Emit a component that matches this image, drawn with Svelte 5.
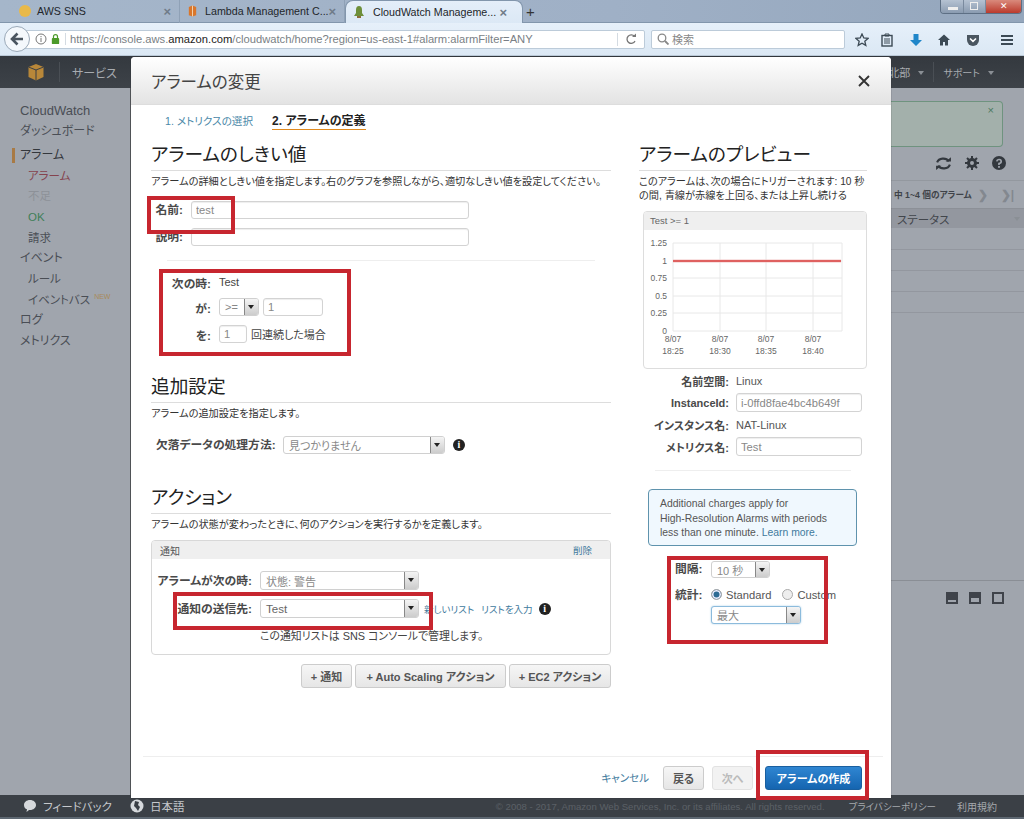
<script lang="ts">
	const tabs = [
		{ title: 'AWS SNS', color: '#e9b949', w: 180 },
		{ title: 'Lambda Management C...', color: '#d9762b', w: 165 }
	];
	const sideNav = [
		{ label: 'CloudWatch', cls: 'top brand' },
		{ label: 'ダッシュボード', cls: 'top' },
		{ label: 'アラーム', cls: 'top current' },
		{ label: 'アラーム', cls: 'sub red' },
		{ label: '不足', cls: 'sub faded' },
		{ label: 'OK', cls: 'sub green' },
		{ label: '請求', cls: 'sub' },
		{ label: 'イベント', cls: 'top' },
		{ label: 'ルール', cls: 'sub' },
		{ label: 'イベントバス', cls: 'sub', isNew: true },
		{ label: 'ログ', cls: 'top' },
		{ label: 'メトリクス', cls: 'top' }
	];
	const yTicks = [
		{ label: '1.25', y: 13 },
		{ label: '1', y: 31 },
		{ label: '0.75', y: 48 },
		{ label: '0.5', y: 66 },
		{ label: '0.25', y: 83 },
		{ label: '0', y: 101 }
	];
	const xTicks = [
		{ time: '18:25', x: 29 },
		{ time: '18:30', x: 76 },
		{ time: '18:35', x: 122 },
		{ time: '18:40', x: 169 }
	];
	// red annotation boxes drawn over the screenshot
	const marks = [
		{ x: 147, y: 196, w: 88, h: 38 },
		{ x: 159, y: 269, w: 192, h: 87 },
		{ x: 173, y: 592, w: 260, h: 38 },
		{ x: 667, y: 556, w: 161, h: 88 },
		{ x: 756, y: 750, w: 113, h: 50 }
	];
</script>

<div class="page">
	<div class="tabstrip">
		{#each tabs as t, i}
			<div class="tab" style="width:{t.w}px">
				{#if i === 0}
					<span class="fav" style="background:{t.color}"></span>
				{:else}
					<svg class="favsvg" viewBox="0 0 12 12"><path d="M2 1.500L6 0l4 1.500v9L6 12l-4-1.500z" fill={t.color}/><path d="M6 0v12" stroke="#f3d9b8"/></svg>
				{/if}
				<span class="tabtitle">{t.title}</span>
				<span class="tabx">×</span>
			</div>
		{/each}
		<div class="tab active">
			<svg class="favsvg bell" viewBox="0 0 14 14"><path d="M7 1c2 0 3 1.500 3 4v3l2 3H2l2-3V5c0-2.500 1-4 3-4z" fill="#6d8f3a"/><rect x="5" y="11" width="4" height="2" fill="#8a6d3a"/></svg>
			<span class="tabtitle">CloudWatch Manageme...</span>
			<span class="tabx">×</span>
		</div>
		<span class="newtab">+</span>
		<div class="winbtns">
			<span class="wb"><i class="wmin"></i></span>
			<span class="wb"><i class="wmax"></i></span>
			<span class="wb close">✕</span>
		</div>
	</div>

	<div class="toolbar">
		<div class="back">
			<svg viewBox="0 0 14 14" width="14" height="14"><path d="M7.500 1.500L2 7l5.500 5.500M2.500 7H13" fill="none" stroke="#4a5560" stroke-width="2.600"/></svg>
		</div>
		<div class="urlbar">
			<svg class="ic" viewBox="0 0 12 12" width="12" height="12"><circle cx="6" cy="6" r="5" fill="none" stroke="#777"/><path d="M6 5v4M6 3v1.200" stroke="#777"/></svg>
			<svg class="ic" viewBox="0 0 12 12" width="11" height="12"><rect x="2" y="5" width="8" height="6.500" rx="1" fill="#4c9a2a"/><path d="M3.800 5V3.500a2.200 2.200 0 0 1 4.400 0V5" fill="none" stroke="#4c9a2a" stroke-width="1.300"/></svg>
			<span class="url">https://console.aws.<b>amazon.com</b>/cloudwatch/home?region=us-east-1#alarm:alarmFilter=ANY</span>
			<span class="reload">
				<svg viewBox="0 0 12 12" width="12" height="12"><path d="M9.500 3.500A4.200 4.200 0 1 0 10 8" fill="none" stroke="#777" stroke-width="1.300"/><path d="M7 4h4V0.500z" fill="#777"/></svg>
			</span>
		</div>
		<div class="searchbar">
			<svg viewBox="0 0 12 12" width="12" height="12"><circle cx="5" cy="5" r="3.800" fill="none" stroke="#888" stroke-width="1.300"/><path d="M8 8l3.500 3.500" stroke="#888" stroke-width="1.800"/></svg>
			<span>検索</span>
		</div>
		<div class="tools">
			<svg viewBox="0 0 14 14" width="14" height="14" style="left:855px"><path d="M7 1l1.800 4 4.200.400-3.200 2.800 1 4.200L7 10.200 3.200 12.400l1-4.200L1 5.400 5.200 5z" fill="none" stroke="#3c4a55" stroke-width="1.300"/></svg>
			<svg viewBox="0 0 14 14" width="14" height="14" style="left:880px"><rect x="2" y="2.500" width="10" height="10.500" fill="none" stroke="#3c4a55" stroke-width="1.400"/><path d="M5 1h4v2H5zM4 6h6M4 8h6M4 10h6" stroke="#3c4a55" fill="none"/></svg>
			<svg viewBox="0 0 14 14" width="14" height="14" style="left:909px"><path d="M4.500 1h5v6H13l-6 6-6-6h3.500z" fill="#1f86c9"/></svg>
			<svg viewBox="0 0 14 14" width="14" height="14" style="left:937px"><path d="M7 1.500L1 7h2v5.500h3V9h2v3.500h3V7h2z" fill="#3c4a55"/></svg>
			<svg viewBox="0 0 14 14" width="14" height="14" style="left:966px"><path d="M1 2h12v5a6 6 0 0 1-12 0z" fill="#4a5660"/><path d="M4 5.500l3 2.800 3-2.800" fill="none" stroke="#fff" stroke-width="1.600"/></svg>
			<svg viewBox="0 0 14 14" width="14" height="14" style="left:1000px"><path d="M1 3h12M1 7h12M1 11h12" stroke="#3c4a55" stroke-width="2.200"/></svg>
		</div>
	</div>

	<div class="console">
		<div class="topnav">
			<svg class="cube" viewBox="0 0 18 18" width="18" height="18"><path d="M9 1l7.500 3v10L9 17.500 1.500 14V4z" fill="#b88739"/><path d="M1.500 4L9 7l7.500-3M9 7v10.500" fill="none" stroke="#3a3f45" stroke-width="1"/></svg>
			<span class="navsep"></span>
			<span class="navitem services">サービス</span>
			<span class="spacer"></span>
			<span class="navitem">北部<i class="caret"></i></span>
			<span class="navsep tail"></span>
			<span class="navitem last">サポート<i class="caret"></i></span>
		</div>

		<div class="workspace">
			<nav class="side">
				{#each sideNav as item}
					<div class={'sideitem ' + item.cls}>{item.label}{#if item.isNew}<sup>NEW</sup>{/if}</div>
				{/each}
			</nav>
			<div class="under"></div>
			<div class="behind">
				<div class="notice"><span>×</span></div>
				<div class="behindicons">
					<svg viewBox="0 0 16 14" width="17" height="15"><path d="M2 6a6 5 0 0 1 11-1M14 8a6 5 0 0 1-11 1" fill="none" stroke="#33383e" stroke-width="2"/><path d="M10 5h5V1zM6 9H1v4z" fill="#33383e"/></svg>
					<svg viewBox="0 0 14 14" width="14" height="14"><circle cx="7" cy="7" r="3.500" fill="none" stroke="#33383e" stroke-width="3"/><path d="M7 0v3M7 11v3M0 7h3M11 7h3M2 2l2 2M10 10l2 2M12 2l-2 2M4 10l-2 2" stroke="#33383e" stroke-width="2"/></svg>
					<svg viewBox="0 0 14 14" width="14" height="14"><circle cx="7" cy="7" r="7" fill="#33383e"/><path d="M4.800 5.300A2.200 2 0 1 1 7 7.500V9" fill="none" stroke="#a0a5ad" stroke-width="1.700"/><rect x="6.100" y="10" width="1.800" height="1.800" fill="#a0a5ad"/></svg>
				</div>
				<div class="pager"><span>中 1~4 個のアラーム</span><b>❯</b><b class="lastp">❯|</b></div>
				<div class="thead"><span>ステータス</span><i class="caret"></i></div>
				<div class="trow"></div>
				<div class="trow"></div>
				<div class="trow"></div>
				<div class="trow"></div>
				<div class="splitter">
					<span class="sp a"></span><span class="sp b"></span><span class="sp c"></span>
				</div>
			</div>
		</div>

		<div class="footer">
			<span class="fb">
				<svg viewBox="0 0 14 14" width="14" height="14"><path d="M7 1c3.500 0 6 2.200 6 5s-2.500 5-6 5l-1 0-2.500 2 .5-2.800C2 9.800 1 8 1 6c0-2.800 2.500-5 6-5z" fill="#d6d9dc"/></svg>
				フィードバック
			</span>
			<span class="fb lang">
				<svg viewBox="0 0 14 14" width="14" height="14"><circle cx="7" cy="7" r="6.500" fill="#d6d9dc"/><path d="M5 2l4 1-1 3 2 2-2 4-2-3-2-2z" fill="#3a3f45"/></svg>
				日本語
			</span>
			<span class="copy">© 2008 - 2017, Amazon Web Services, Inc. or its affiliates. All rights reserved.</span>
			<span class="flink">プライバシーポリシー</span>
			<span class="flink terms">利用規約</span>
		</div>

		<section class="modal">
			<header class="mhead">
				<h1>アラームの変更</h1>
				<svg viewBox="0 0 12 12" width="12" height="12"><path d="M1 1l10 10M11 1L1 11" stroke="#333" stroke-width="1.900"/></svg>
			</header>

			<div class="steps">
				<span class="step">1. メトリクスの選択</span>
				<span class="step on">2. アラームの定義</span>
			</div>

			<div class="columns">
				<div class="left">
					<h2>アラームのしきい値</h2>
					<p class="desc">アラームの詳細としきい値を指定します。右のグラフを参照しながら、適切なしきい値を設定してください。</p>

					<div class="frow name"><label>名前:</label><input value="test" readonly /></div>
					<div class="frow desc2"><label>説明:</label><input readonly /></div>
					<hr class="inner" />

					<div class="cond">
						<div class="crow"><label>次の時:</label><span class="val">Test</span></div>
						<div class="crow mid">
							<label>が:</label>
							<div class="sel op"><span>&gt;=</span><i class="arrow"></i></div>
							<input class="num" value="1" readonly />
						</div>
						<div class="crow">
							<label>を:</label>
							<input class="cnt" value="1" readonly />
							<span class="val times">回連続した場合</span>
						</div>
					</div>

					<h2 class="extra">追加設定</h2>
					<p class="desc">アラームの追加設定を指定します。</p>
					<div class="missing">
						<label>欠落データの処理方法:</label>
						<div class="sel wide"><span>見つかりません</span><i class="arrow"></i></div>
						<span class="info">i</span>
					</div>

					<h2 class="actions">アクション</h2>
					<p class="desc">アラームの状態が変わったときに、何のアクションを実行するかを定義します。</p>
					<div class="panel">
						<div class="phead"><span>通知</span><a href="#top">削除</a></div>
						<div class="pbody">
							<div class="prow">
								<label>アラームが次の時:</label>
								<div class="sel pick"><span>状態: 警告</span><i class="arrow"></i></div>
							</div>
							<div class="prow second">
								<label>通知の送信先:</label>
								<div class="sel pick"><span class="dark">Test</span><i class="arrow"></i></div>
								<a class="mini first" href="#top">新しいリスト</a>
								<a class="mini" href="#top">リストを入力</a>
								<span class="info">i</span>
							</div>
							<p class="hint">この通知リストは SNS コンソールで管理します。</p>
						</div>
					</div>
					<div class="addbtns">
						<button>+ 通知</button>
						<button>+ Auto Scaling アクション</button>
						<button>+ EC2 アクション</button>
					</div>
				</div>

				<div class="right">
					<h2>アラームのプレビュー</h2>
					<p class="desc pv">このアラームは、次の場合にトリガーされます: 10 秒<br />の間, 青線が赤線を上回る、または上昇し続ける</p>

					<div class="graph">
						<div class="ghead">Test &gt;= 1</div>
						<svg viewBox="0 0 222 139" width="222" height="139">
							{#each yTicks as t}
								<line x1="29" x2="198" y1={t.y} y2={t.y} stroke="#e8e8e8" />
								<text x="23" y={t.y + 3} text-anchor="end">{t.label}</text>
							{/each}
							{#each xTicks as t}
								<line x1={t.x} x2={t.x} y1="13" y2="101" stroke="#e8e8e8" />
								<text x={t.x} y="112" text-anchor="middle">8/07</text>
								<text x={t.x} y="124" text-anchor="middle">{t.time}</text>
							{/each}
							<line x1="198" x2="198" y1="13" y2="101" stroke="#e8e8e8" />
							<line x1="29" x2="197" y1="31" y2="31" stroke="#f2c4c4" stroke-width="3" />
							<line x1="29" x2="197" y1="31" y2="31" stroke="#d9413f" stroke-width="1.600" />
						</svg>
					</div>

					<div class="meta lead"><label>名前空間:</label><span>Linux</span></div>
					<div class="meta"><label>InstanceId:</label><input value="i-0ffd8fae4bc4b649f" readonly /></div>
					<div class="meta"><label>インスタンス名:</label><span>NAT-Linux</span></div>
					<div class="meta"><label>メトリクス名:</label><input value="Test" readonly /></div>
					<hr class="inner rhr" />

					<div class="charges">
						Additional charges apply for<br />High-Resolution Alarms with periods<br />less than one minute. <a href="#top">Learn more.</a>
					</div>

					<div class="period">
						<label>間隔:</label>
						<div class="sel sec"><span>10 秒</span><i class="arrow"></i></div>
					</div>
					<div class="stat">
						<label>統計:</label>
						<span class="radio on"></span><span class="rlabel">Standard</span>
						<span class="radio"></span><span class="rlabel">Custom</span>
					</div>
					<div class="sel max"><span>最大</span><i class="arrow"></i></div>
				</div>
			</div>

			<footer class="mfoot">
				<a href="#top">キャンセル</a>
				<button>戻る</button>
				<button class="off">次へ</button>
				<button class="primary">アラームの作成</button>
			</footer>
		</section>
	</div>

	{#each marks as m}
		<div class="mark" style="left:{m.x}px;top:{m.y}px;width:{m.w}px;height:{m.h}px"></div>
	{/each}
</div>

<style>
	:global(body) { margin: 0; background: #3a3f45; }
	.page {
		position: relative; width: 1024px; height: 819px; overflow: hidden;
		font-family: "Liberation Sans", "Noto Sans CJK JP", sans-serif;
		font-feature-settings: "palt"; color: #444; font-size: 11px;
	}

	/* browser chrome */
	.tabstrip {
		height: 23px; display: flex; align-items: center; position: relative;
		background: linear-gradient(90deg, #a5b6ca, #9fb0c6 60%, #94a6bc);
		border-bottom: 1px solid #8296ac; box-sizing: border-box;
	}
	.tab { display: flex; align-items: center; height: 23px; padding-left: 19px; box-sizing: border-box; font-size: 10.700px; color: #22262a; border-right: 1px solid #8fa1b6; }
	.tab:nth-child(2) { padding-left: 7px; }
	.fav { width: 12px; height: 12px; border-radius: 50%; margin-right: 6px; flex: none; }
	.tabtitle { flex: 1; white-space: nowrap; }
	.tabx { color: #6f7b88; font-size: 13px; font-weight: bold; margin-right: 8px; }
	.tab.active {
		width: 178px; padding-left: 6px; background: linear-gradient(#e4eef9, #dbe8f5);
		border-radius: 8px 8px 0 0; border: 1px solid #8296ac; border-bottom: 0; height: 24px; margin-top: 1px;
	}
	.tab.active .tabx { margin-right: 15px; }
	.favsvg { width: 11px; height: 12px; margin-right: 7px; flex: none; }
	.favsvg.bell { width: 14px; height: 14px; }
	.newtab { margin-left: 3px; font-size: 15px; color: #333; }
	.winbtns { position: absolute; right: 2px; top: 0; width: 82px; height: 14px; display: flex; border: 1px solid #5d6f84; border-top: 0; border-radius: 0 0 4px 4px; overflow: hidden; box-sizing: border-box; }
	.wb { flex: 1; background: linear-gradient(#b5c2d2, #8a9bb0); position: relative; border-right: 1px solid #7a8a9e; }
	.wb.close { flex: 1.600; background: linear-gradient(#d98a7c, #bb3a2c); color: #fff; font-size: 9px; text-align: center; line-height: 13px; border: 0; }
	.wmin { position: absolute; left: 7px; bottom: 3px; width: 10px; height: 3px; background: #eee; }
	.wmax { position: absolute; left: 6px; top: 2px; width: 6px; height: 6px; border: 1px solid #eee; }

	.toolbar {
		height: 33px; display: flex; align-items: center; position: relative;
		background: linear-gradient(#e6f0fa, #dbe8f4); border-bottom: 1px solid #b9c8d6; box-sizing: border-box;
	}
	.back {
		width: 24px; height: 24px; border-radius: 50%; background: #f4f8fc; border: 1px solid #9aa9b8;
		margin-left: 4px; display: flex; align-items: center; justify-content: center; flex: none; z-index: 1;
	}
	.urlbar {
		width: 626px; height: 19px; margin-left: -11px; padding-left: 15px; background: #fff; border: 1px solid #bccbd9;
		display: flex; align-items: center; gap: 3px; border-radius: 2px; box-sizing: border-box;
	}
	.url { flex: 1; color: #7a7f85; font-size: 11.200px; white-space: nowrap; margin-left: 1px; padding-left: 4px; border-left: 1px solid #d4dbe2; overflow: hidden; }
	.url b { font-weight: normal; color: #222; }
	.reload { width: 26px; border-left: 1px solid #d4dbe2; text-align: center; height: 13px; line-height: 12px; }
	.searchbar {
		width: 194px; height: 19px; margin-left: 6px; background: #fff; border: 1px solid #bccbd9;
		display: flex; align-items: center; gap: 3px; padding-left: 5px; box-sizing: border-box; color: #888; font-size: 11px; border-radius: 2px;
	}
	.tools svg { position: absolute; top: 10px; }

	/* dimmed console behind the dialog */
	.console { position: relative; height: 763px; display: flex; flex-direction: column; background: #a0a5ad; }
	.topnav {
		height: 32px; flex: none; display: flex; align-items: center; color: #a7abb0; font-size: 11px;
		background: linear-gradient(#34393f, #3d4248);
	}
	.cube { margin-left: 27px; }
	.navsep { width: 1px; height: 20px; background: #4a4f55; margin-left: 14px; }
	.navsep.tail { margin-left: 9px; }
	.navitem { flex: none; white-space: nowrap; }
	.navitem.services { margin-left: 12px; font-size: 12px; }
	.spacer { flex: 1; }
	.navitem.last { margin: 0 30px 0 9px; font-size: 10px; }
	.caret { display: inline-block; border: 3px solid transparent; border-top: 4px solid #8a8f95; border-bottom: 0; margin-left: 8px; vertical-align: 2px; }

	.workspace { flex: 1; display: flex; min-height: 0; }
	.side { width: 131px; flex: none; padding-top: 12.500px; box-sizing: border-box; border-right: 1px solid #55585c; }
	.sideitem { line-height: 20.700px; height: 20.700px; padding-left: 20px; color: #4a4e55; font-size: 12px; }
	.sideitem.top.brand { font-size: 13px; }
	.sideitem.current { position: relative; color: #33373c; margin-top: 3px; }
	.sideitem.current::before { content: ""; position: absolute; left: 12px; top: 3px; width: 3px; height: 15px; background: #a87a45; }
	.sideitem.sub { padding-left: 28px; font-size: 11.500px; }
	.sideitem.red { color: #85434e; }
	.sideitem.faded { color: #8d9198; margin-top: 0; }
	.sideitem.green { color: #3f7f58; }
	.sideitem sup { font-size: 7px; color: #a98a5a; margin-left: 4px; vertical-align: 5px; line-height: 0; }
	.under { width: 760px; flex: none; }
	.behind { flex: 1; min-width: 0; position: relative; padding-top: 13px; color: #42464c; }
	.notice { height: 46px; width: 112px; box-sizing: border-box; border: 1px solid #6f937f; border-left: 0; border-radius: 0 4px 4px 0; background: #a3b0ab; text-align: right; padding: 2px 8px; color: #4c7a5f; }
	.behindicons { display: flex; gap: 13px; align-items: center; margin: 8px 0 0 44px; height: 16px; }
	.pager { margin-top: 9px; height: 27px; border-top: 1px solid #93989f; display: flex; align-items: center; font-size: 8.700px; color: #3f4349; font-weight: bold; white-space: nowrap; overflow: hidden; padding-left: 3px; }
	.pager b { color: #83888f; font-size: 12px; margin-left: 6px; }
	.pager .lastp { margin-left: 13px; }
	.thead { height: 20px; background: #93979f; border-top: 1px solid #8c9097; display: flex; align-items: center; justify-content: space-between; font-size: 11.500px; padding: 0 4px 0 6px; box-sizing: border-box; }
	.trow { height: 21px; border-bottom: 1px solid #93979f; box-sizing: border-box; }
	.thead + .trow { height: 22px; }
	.splitter { margin-top: 267px; border-top: 1px solid #8a8e95; height: 24px; display: flex; gap: 11px; padding: 11px 0 0 55px; position: relative; }
	.sp { width: 12px; height: 12px; box-sizing: border-box; border: 2px solid #3f434a; }
	.sp.a { background: linear-gradient(#3f434a 75%, #a0a5ad 75%); }
	.sp.b { background: linear-gradient(#3f434a 50%, #a0a5ad 50%); }

	.footer {
		height: 24px; flex: none; display: flex; align-items: center; background: #3b4046; color: #c5c8cc; font-size: 11.500px;
		border-bottom: 2px solid #5e6872; box-sizing: border-box;
	}
	.fb { display: flex; align-items: center; gap: 6px; margin-left: 23px; }
	.fb.lang { margin-left: 18px; }
	.copy { margin-left: auto; color: #5b6067; font-size: 9.600px; }
	.flink { font-size: 9.500px; color: #a5a9ad; margin-left: 24px; }
	.flink.terms { margin: 0 27px 0 21px; font-size: 10px; }

	/* dialog */
	.modal {
		position: absolute; z-index: 2; left: 131px; top: 1px; width: 760px; height: 741px; background: #fff;
		display: flex; flex-direction: column; border-radius: 4px 4px 0 0; box-shadow: 0 0 1px #222;
	}
	.mhead {
		height: 48px; flex: none; box-sizing: border-box; display: flex; align-items: center; justify-content: space-between;
		padding: 0 21px 0 20px; background: linear-gradient(#fff, #e3e3e3); border-bottom: 1px solid #ddd; border-radius: 4px 4px 0 0;
	}
	.mhead h1 { margin: 0; font-size: 16.500px; font-weight: normal; color: #444; }
	.steps { display: flex; gap: 19px; padding: 8px 0 0 34px; height: 16px; flex: none; }
	.step { font-size: 10.600px; line-height: 16px; color: #4a88a8; }
	.step.on { font-size: 12px; color: #222; font-weight: bold; border-bottom: 1px solid #e08a1e; height: 16px; }
	.columns { flex: 1; display: flex; padding: 0 24px 0 20px; gap: 28px; min-height: 0; }
	.left { width: 460px; flex: none; }
	.right { width: 228px; flex: none; }
	h2 {
		margin: 14px 0 0; font-size: 18.700px; line-height: 24px; font-weight: normal; color: #222;
		border-bottom: 1px solid #ddd; padding-bottom: 3px;
	}
	.desc { margin: 4px 0 0; font-size: 10.200px; line-height: 14px; color: #333; white-space: nowrap; }
	label { font-weight: bold; color: #4a4a4a; font-size: 11.800px; }
	.right label { font-size: 11px; }
	.right .period label { font-size: 11.800px; padding-bottom: 5px; }
	.right .stat label { font-size: 11.800px; padding-bottom: 2px; }
	input {
		font: inherit; color: #888; font-size: 11.200px; border: 1px solid #d3d3d3; border-radius: 3px; padding: 0 4px; box-sizing: border-box;
		height: 18px; background: #fff; outline: 0; box-shadow: inset 0 1px 1px #eee;
	}
	.frow { display: flex; align-items: center; gap: 8px; height: 18px; }
	.frow label { width: 32px; text-align: right; padding-bottom: 4px; }
	.frow input { width: 278px; }
	.frow.name { margin-top: 12px; }
	.frow.desc2 { margin-top: 9px; }
	hr.inner { border: 0; border-top: 1px solid #eee; margin: 14px 16px 0; }
	.cond { margin-top: 12px; }
	.crow { display: flex; align-items: center; gap: 4px; height: 18px; }
	.crow label { width: 60px; text-align: right; margin-right: 4px; }
	.crow.mid { margin-top: 7px; margin-bottom: 9px; }
	.val { color: #444; font-size: 11px; }
	.sel {
		display: flex; align-items: center; justify-content: space-between; height: 18px; box-sizing: border-box;
		border: 1px solid #d0d0d0; border-radius: 3px; background: #fff; color: #888; font-size: 11px; padding-left: 5px; flex: none;
	}
	.sel .dark { color: #666; font-size: 11.500px; }
	.arrow {
		width: 13px; align-self: stretch; background: linear-gradient(#f4f4f4, #ccc); border-left: 1px solid #888; border-radius: 0 2px 2px 0;
		position: relative; flex: none;
	}
	.arrow::after {
		content: ""; position: absolute; left: 3px; top: 6px; border: 3.500px solid transparent; border-top: 4px solid #222; border-bottom: 0;
	}
	.sel.op { width: 40px; }
	.num { width: 60px; }
	.cnt { width: 28px; }
	h2.extra { margin-top: 32px; }
	.missing { display: flex; align-items: center; margin: 15px 0 0 5px; height: 18px; }
	.missing label { width: 127px; white-space: nowrap; padding-bottom: 3px; }
	.sel.wide { width: 162px; }
	.info {
		width: 12px; height: 12px; border-radius: 50%; background: #222; color: #fff; font: bold 10px/12px "Liberation Serif", serif;
		text-align: center; margin-left: 8px; flex: none;
	}
	h2.actions { margin-top: 32px; }
	.panel { margin-top: 8px; border: 1px solid #d8d8d8; border-radius: 4px; height: 115px; box-sizing: border-box; }
	.phead { height: 18px; background: #efefef; display: flex; justify-content: space-between; align-items: center; padding: 0 18px 0 8px; font-size: 10px; color: #555; border-radius: 3px 3px 0 0; }
	.phead a, .mini { color: #3f7a9d; text-decoration: none; font-size: 9.500px; }
	.pbody { padding-top: 12px; }
	.prow { display: flex; align-items: center; height: 19px; }
	.prow label { width: 100px; text-align: right; flex: none; padding-bottom: 3px; white-space: nowrap; }
	.prow.second { margin-top: 9px; }
	.sel.pick { width: 159px; height: 19px; margin-left: 8px; }
	.mini.first { margin-left: 5px; }
	.mini { margin-left: 7px; }
	.prow .info { margin-left: 6px; }
	.hint { margin: 9px 0 0 108px; font-size: 10.900px; color: #444; white-space: nowrap; }
	.addbtns { display: flex; justify-content: flex-end; gap: 3px; margin-top: 9px; }
	button {
		font: inherit; font-size: 11px; font-weight: bold; color: #555; height: 24px; padding: 0 8px; box-sizing: border-box;
		border: 1px solid #ccc; border-radius: 3px; background: linear-gradient(#f6f6f6, #e6e6e6);
	}
	.addbtns button:nth-child(1) { width: 51px; }
	.addbtns button:nth-child(2) { width: 151px; }
	.addbtns button:nth-child(3) { width: 102px; }

	.graph { margin: 8px 0 0 4px; width: 224px; height: 158px; box-sizing: border-box; border: 1px solid #ddd; border-radius: 4px; }
	.ghead { height: 18px; background: #efefef; color: #666; font-size: 9.500px; line-height: 18px; padding-left: 6px; border-radius: 3px 3px 0 0; }
	.graph svg { display: block; }
	.graph text { font-size: 8.500px; fill: #666; font-family: "Liberation Sans", sans-serif; }
	.meta { display: flex; align-items: center; height: 19px; margin-top: 3px; }
	.meta.lead { margin-top: 2px; }
	.meta label { width: 90px; text-align: right; margin-right: 7px; flex: none; }
	.meta span { color: #555; }
	.meta input { width: 126px; height: 19px; }
	.rhr { margin: 11px 0 0 4px; }
	.charges {
		margin: 18px 0 0 9px; width: 209px; height: 57px; box-sizing: border-box; padding: 7px 0 0 11px; font-size: 10.400px; line-height: 14.500px;
		border: 1px solid #5f93ad; border-radius: 4px; background: #f0f8fe; color: #555;
	}
	.charges a { color: #3f7a9d; text-decoration: none; }
	.period { display: flex; align-items: center; height: 17px; margin: 15px 0 0 36px; }
	.period label, .stat label { width: 36px; flex: none; }
	.sel.sec { width: 59px; height: 17px; margin-left: 0; }
	.stat { display: flex; align-items: center; height: 17px; margin: 8px 0 0 36px; color: #555; }
	.radio { width: 9px; height: 9px; border-radius: 50%; border: 1px solid #aaa; background: #eee; margin-right: 4px; flex: none; }
	.radio.on { background: #2c6a93; box-shadow: inset 0 0 0 1.500px #eef; }
	.rlabel { margin-right: 11px; font-size: 11.200px; }
	.sel.max { width: 90px; margin: 3px 0 0 72px; border-color: #8cbbdc; box-shadow: 0 0 2px #a5cce6; }

	.mfoot {
		flex: none; height: 41px; margin: 0 8px 0 12px; border-top: 1px solid #eee; display: flex; align-items: center; justify-content: flex-end;
		padding-right: 21px; gap: 8px;
	}
	.mfoot a { color: #3f7a9d; text-decoration: none; font-size: 10.500px; margin-right: 6px; }
	.mfoot button { width: 41px; padding: 0; }
	.mfoot button.off { color: #bbb; background: #f2f2f2; border-color: #e2e2e2; margin-right: 4px; }
	.mfoot button.primary { width: 97px; color: #fff; background: linear-gradient(#2f86d2, #1565b0); border: 1px solid #1a5f9f; }

	.mark { position: absolute; z-index: 3; box-sizing: border-box; border: 4px solid #c7262f; pointer-events: none; }
</style>
